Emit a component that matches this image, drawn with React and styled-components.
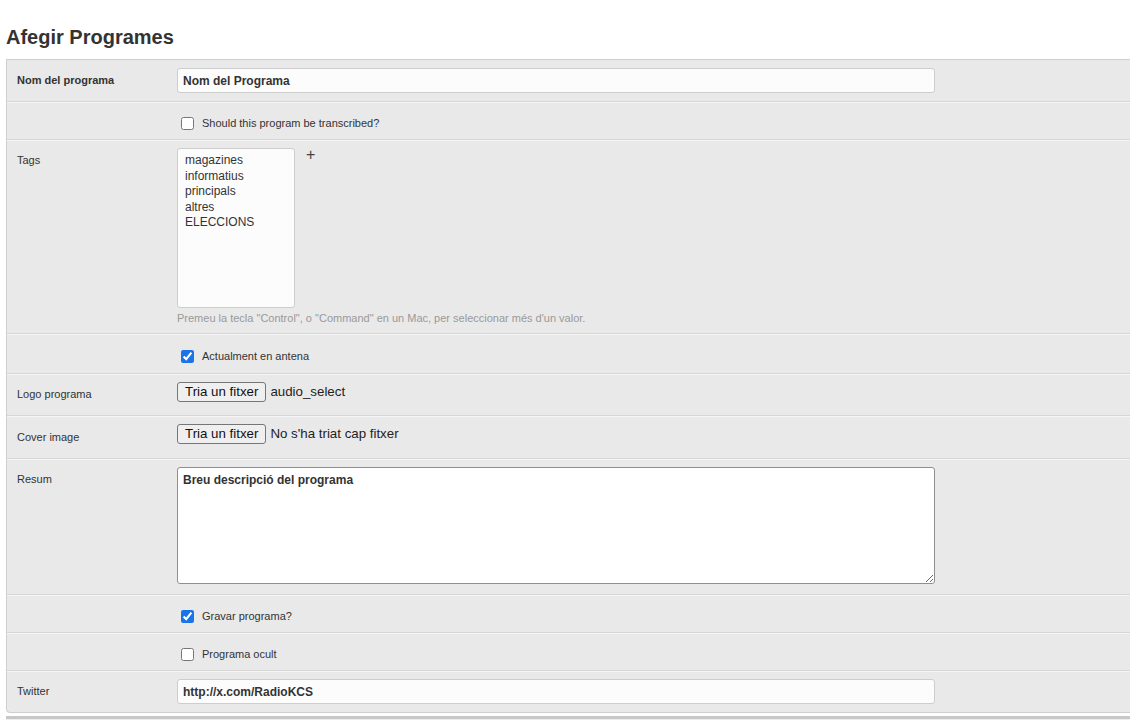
import React from "react";
import styled, { createGlobalStyle } from "styled-components";

const GlobalStyle = createGlobalStyle`
  html, body {
    margin: 0;
    padding: 0;
    overflow: hidden;
    background: #fff;
  }
  body {
    font-family: "Liberation Sans", Arial, Helvetica, sans-serif;
    color: #333;
  }
`;

const Page = styled.div`
  padding: 0 0 0 6px;
  margin-right: -12px;
`;

const Title = styled.h1`
  font-size: 20px;
  font-weight: 700;
  color: #333;
  margin: 0;
  padding: 26px 0 10px 0;
  line-height: 23px;
`;

const Panel = styled.fieldset`
  margin: 0;
  padding: 0;
  border: 1px solid #cfcfcf;
  border-radius: 0 0 0 4px;
  background: #e9e9e9;
  min-width: 0;
`;

const Row = styled.div`
  display: flex;
  align-items: flex-start;
  padding: ${(p) => p.$pad || "8px 10px"};
  border-bottom: 1px solid #d6d6d6;
  box-shadow: inset 0 1px 0 #f6f6f6;
  &:first-child {
    box-shadow: none;
  }
  &:last-child {
    border-bottom: none;
  }
`;

const Label = styled.label`
  flex: 0 0 160px;
  font-size: 11px;
  line-height: 13px;
  padding-top: ${(p) => p.$top || "6px"};
  font-weight: ${(p) => (p.$bold ? 700 : 400)};
  color: #333;
`;

const Field = styled.div`
  flex: 1;
  display: flex;
  flex-direction: column;
  padding-bottom: ${(p) => p.$bottom || "0"};
`;

const Inline = styled.div`
  display: flex;
  align-items: ${(p) => p.$align || "center"};
  gap: ${(p) => p.$gap || "4px"};
  min-height: ${(p) => p.$height || "auto"};
`;

const TextInput = styled.input`
  box-sizing: border-box;
  width: 758px;
  height: 25px;
  padding: 0 5px;
  border: 1px solid #cdcdcd;
  border-radius: 3px;
  background: #fcfcfc;
  font-family: "Liberation Sans", Arial, sans-serif;
  font-size: 12px;
  font-weight: 700;
  color: #333;
  outline: none;
`;

const TextArea = styled.textarea`
  box-sizing: border-box;
  width: 758px;
  height: 117px;
  padding: 5px;
  border: 1px solid #8f8f8f;
  border-radius: 3px;
  background: #fff;
  font-family: "Liberation Sans", Arial, sans-serif;
  font-size: 12px;
  font-weight: 700;
  line-height: 14px;
  color: #333;
  outline: none;
  resize: both;
  display: block;
`;

const Check = styled.input`
  width: 13px;
  height: 13px;
  margin: 0 0 0 4px;
  accent-color: #1a73e8;
`;

const CheckRow = styled.label`
  display: flex;
  align-items: center;
  gap: 8px;
  font-size: 11px;
  line-height: 13px;
  color: #333;
  padding: 7px 0 1px;
`;

const MultiSelect = styled.div`
  box-sizing: border-box;
  width: 118px;
  height: 160px;
  border: 1px solid #cdcdcd;
  border-radius: 3px;
  background: #fcfcfc;
  padding: 4px 7px;
`;

const Option = styled.div`
  font-size: 12px;
  line-height: 15.5px;
  color: #333;
`;

const AddLink = styled.span`
  font-size: 16px;
  line-height: 16px;
  color: #444;
  margin-left: 11px;
  margin-top: -1px;
`;

const Help = styled.div`
  font-size: 11px;
  color: #999;
  margin-top: 4px;
  line-height: 13px;
`;

const FileButton = styled.button`
  font-family: "Liberation Sans", Arial, sans-serif;
  font-size: 13.3px;
  color: #111;
  background: #efefef;
  border: 1px solid #767676;
  border-radius: 3px;
  padding: 1px 7px;
  height: 20px;
  line-height: 16px;
`;

const FileName = styled.span`
  font-size: 13.3px;
  line-height: 20px;
  color: #222;
`;

const SubmitBar = styled.div`
  margin-top: 3px;
  height: 20px;
  border-top: 3px solid #c8c8c8;
  background: #eee;
`;

const tags = ["magazines", "informatius", "principals", "altres", "ELECCIONS"];

export default function App() {
  return (
    <>
      <GlobalStyle />
      <Page>
        <Title>Afegir Programes</Title>
        <Panel>
          <Row>
            <Label $bold>Nom del programa</Label>
            <Field>
              <TextInput defaultValue="Nom del Programa" readOnly />
            </Field>
          </Row>
          <Row>
            <Label />
            <Field>
              <CheckRow>
                <Check type="checkbox" />
                Should this program be transcribed?
              </CheckRow>
            </Field>
          </Row>
          <Row>
            <Label>Tags</Label>
            <Field>
              <Inline $align="flex-start" $gap="0">
                <MultiSelect>
                  {tags.map((t) => (
                    <Option key={t}>{t}</Option>
                  ))}
                </MultiSelect>
                <AddLink>+</AddLink>
              </Inline>
              <Help>
                Premeu la tecla "Control", o "Command" en un Mac, per seleccionar més d'un valor.
              </Help>
            </Field>
          </Row>
          <Row $pad="9px 10px">
            <Label />
            <Field>
              <CheckRow>
                <Check type="checkbox" defaultChecked />
                Actualment en antena
              </CheckRow>
            </Field>
          </Row>
          <Row>
            <Label $top="6px">Logo programa</Label>
            <Field>
              <Inline $height="25px" $align="flex-start">
                <FileButton>Tria un fitxer</FileButton>
                <FileName>audio_select</FileName>
              </Inline>
            </Field>
          </Row>
          <Row $pad="8px 10px 9px">
            <Label $top="7px">Cover image</Label>
            <Field>
              <Inline $height="25px" $align="flex-start">
                <FileButton>Tria un fitxer</FileButton>
                <FileName>No s'ha triat cap fitxer</FileName>
              </Inline>
            </Field>
          </Row>
          <Row>
            <Label $top="6px">Resum</Label>
            <Field $bottom="2px">
              <TextArea defaultValue="Breu descripció del programa" readOnly />
            </Field>
          </Row>
          <Row>
            <Label />
            <Field>
              <CheckRow>
                <Check type="checkbox" defaultChecked />
                Gravar programa?
              </CheckRow>
            </Field>
          </Row>
          <Row>
            <Label />
            <Field>
              <CheckRow>
                <Check type="checkbox" />
                Programa ocult
              </CheckRow>
            </Field>
          </Row>
          <Row>
            <Label>Twitter</Label>
            <Field>
              <TextInput defaultValue="http://x.com/RadioKCS" readOnly />
            </Field>
          </Row>
        </Panel>
        <SubmitBar />
      </Page>
    </>
  );
}
